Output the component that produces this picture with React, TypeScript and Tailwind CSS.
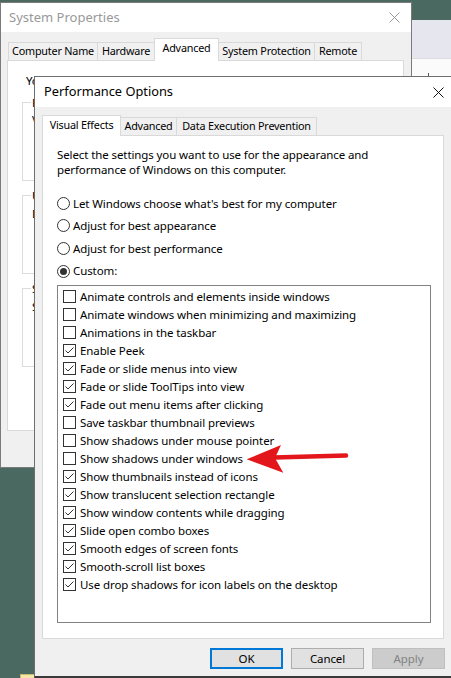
import React from "react";

const CheckBox = ({ checked }: { checked: boolean }) => (
  <span className="w-[13px] h-[13px] border border-[#333333] bg-white flex items-center justify-center shrink-0">
    {checked && (
      <svg width="11" height="11" viewBox="0 0 11 11">
        <path d="M1.5 5.5 L4 8 L9.5 2.5" stroke="#333333" strokeWidth="1" fill="none" />
      </svg>
    )}
  </span>
);

const Radio = ({ checked }: { checked: boolean }) => (
  <span className="w-[13px] h-[13px] rounded-full border border-[#333333] bg-white flex items-center justify-center shrink-0">
    {checked && <span className="w-[7px] h-[7px] rounded-full bg-[#333333]" />}
  </span>
);

const CloseX = ({ color }: { color: string }) => (
  <svg width="11" height="11" viewBox="0 0 11 11">
    <path d="M0.5 0.5 L10.5 10.5 M10.5 0.5 L0.5 10.5" stroke={color} strokeWidth="1" fill="none" />
  </svg>
);

const items: [string, boolean][] = [
  ["Animate controls and elements inside windows", false],
  ["Animate windows when minimizing and maximizing", false],
  ["Animations in the taskbar", false],
  ["Enable Peek", true],
  ["Fade or slide menus into view", true],
  ["Fade or slide ToolTips into view", true],
  ["Fade out menu items after clicking", true],
  ["Save taskbar thumbnail previews", false],
  ["Show shadows under mouse pointer", false],
  ["Show shadows under windows", false],
  ["Show thumbnails instead of icons", true],
  ["Show translucent selection rectangle", true],
  ["Show window contents while dragging", true],
  ["Slide open combo boxes", true],
  ["Smooth edges of screen fonts", true],
  ["Smooth-scroll list boxes", true],
  ["Use drop shadows for icon labels on the desktop", true],
];

const radios: [string, boolean][] = [
  ["Let Windows choose what's best for my computer", false],
  ["Adjust for best appearance", false],
  ["Adjust for best performance", false],
  ["Custom:", true],
];

export default function App() {
  return (
    <div className="relative w-[451px] h-[678px] overflow-hidden bg-[#4a6a61] font-['Noto_Sans',sans-serif] text-[11.5px] tracking-[-0.1px] text-black whitespace-nowrap">
      {/* window behind on the right */}
      <div className="absolute left-[412px] top-[20px] w-[39px] h-[56px] bg-[#e6e6ee] flex flex-col justify-end">
        <div className="h-[18px] bg-[#fbfbfb] border-t border-[#dddddd] relative">
          <div className="absolute left-[16px] bottom-0 w-[1px] h-[3px] bg-[#555555]" />
        </div>
      </div>

      {/* System Properties window */}
      <div className="absolute left-0 top-[2px] w-[412px] h-[466px] bg-[#f0f0f0] border border-[#7a7a7a] flex flex-col">
        <div className="h-[29px] bg-white flex items-center justify-between pl-[8px] pr-[11px] shrink-0">
          <span className="text-[13px] tracking-normal text-[#999999]">System Properties</span>
          <CloseX color="#9a9a9a" />
        </div>
        <div className="pl-[6px] pt-[5px]">
          <div className="flex items-end h-[23px] text-[10.8px] tracking-[-0.2px]">
            <div className="w-[89px] h-[18px] ml-[1px] border-t border-l border-[#d9d9d9] flex items-center justify-center">Computer Name</div>
            <div className="w-[57px] h-[18px] border-t border-l border-[#d9d9d9] flex items-center justify-center">Hardware</div>
            <div className="w-[65px] h-[23px] mb-[-1px] relative z-10 bg-white border-t border-l border-r border-[#d9d9d9] flex items-start justify-center pt-[1px]">Advanced</div>
            <div className="w-[95px] h-[18px] border-t border-[#d9d9d9] flex items-center justify-center">System Protection</div>
            <div className="w-[48px] h-[18px] border-t border-l border-r border-[#d9d9d9] flex items-center justify-center">Remote</div>
          </div>
          <div className="w-[397px] h-[371px] bg-white border border-[#d9d9d9] pl-[14px] pt-[12px] flex flex-col overflow-hidden">
            <div className="pl-[4px] leading-[15px]">You must be logged on as an Administrator to make most of these changes.</div>
            <div className="mt-[14px] mr-[12px] h-[79px] border border-[#dcdcdc] relative pl-[9px] pt-[9px] leading-[15px]">
              <span className="absolute left-[8px] top-[-8px] bg-white px-[1px] leading-[15px]">Performance</span>
              Visual effects, processor scheduling, memory usage and virtual memory
            </div>
            <div className="mt-[14px] mr-[12px] h-[79px] border border-[#dcdcdc] relative pl-[9px] pt-[10px] leading-[15px]">
              <span className="absolute left-[8px] top-[-8px] bg-white px-[1px] leading-[15px]">User Profiles</span>
              Desktop settings related to your sign-in
            </div>
            <div className="mt-[14px] mr-[12px] h-[79px] border border-[#dcdcdc] relative pl-[9px] pt-[10px] leading-[15px]">
              <span className="absolute left-[8px] top-[-8px] bg-white px-[1px] leading-[15px]">Startup and Recovery</span>
              System startup, system failure, and debugging information
            </div>
          </div>
        </div>
      </div>

      {/* Performance Options window */}
      <div className="absolute left-[34px] top-[76px] w-[440px] h-[602px] bg-[#f0f0f0] border-l border-t border-[#6e6e6e] border-b-2 border-b-[#3a3a3a] flex flex-col">
        <div className="h-[30px] bg-white flex items-center pl-[9px] shrink-0 relative">
          <span className="text-[12.8px] tracking-normal">Performance Options</span>
          <div className="absolute left-[398px] top-[10px]">
            <CloseX color="#111111" />
          </div>
        </div>
        <div className="pl-[7px] pt-[8px] flex flex-col">
          <div className="flex items-end h-[20px] text-[10.8px] tracking-[-0.2px]">
            <div className="w-[79px] h-[21px] mb-[-1px] relative z-10 bg-white border-t border-l border-r border-[#d9d9d9] flex items-start justify-center pt-[1px]">Visual Effects</div>
            <div className="w-[55px] h-[18px] border-t border-[#d9d9d9] flex items-center justify-center">Advanced</div>
            <div className="w-[141px] h-[18px] border-t border-l border-r border-[#d9d9d9] flex items-center justify-center">Data Execution Prevention</div>
          </div>
          <div className="w-[402px] h-[504px] bg-white border border-[#d9d9d9] pl-[14px] pt-[11px] flex flex-col">
            <div className="leading-[15px]">
              Select the settings you want to use for the appearance and
              <br />
              performance of Windows on this computer.
            </div>
            <div className="mt-[15px] flex flex-col">
              {radios.map(([label, on]) => (
                <div key={label} className="h-[22.6px] flex items-center gap-[3px]">
                  <Radio checked={on} />
                  <span>{label}</span>
                </div>
              ))}
            </div>
            <div className="mt-[3px] w-[374px] h-[338px] border border-[#828282] pl-[5px] pt-[1px] flex flex-col">
              {items.map(([label, on]) => (
                <div key={label} className="h-[18px] flex items-center gap-[4px]">
                  <CheckBox checked={on} />
                  <span>{label}</span>
                </div>
              ))}
            </div>
          </div>
          <div className="mt-[9px] ml-[168px] flex gap-[8px]">
            <div className="w-[73px] h-[21px] bg-[#e1e1e1] border-2 border-[#0078d7] flex items-center justify-center">OK</div>
            <div className="w-[73px] h-[21px] bg-[#e1e1e1] border border-[#adadad] flex items-center justify-center">Cancel</div>
            <div className="w-[73px] h-[21px] bg-[#cccccc] border border-[#bfbfbf] text-[#838383] flex items-center justify-center">Apply</div>
          </div>
        </div>
      </div>

      {/* yellow icon fragment */}
      <div className="absolute left-[20px] top-[674px] w-[14px] h-[4px] bg-[#f3e8a8] border-t border-l border-[#c9b96e]" />

      {/* red arrow annotation */}
      <svg className="absolute left-[240px] top-[440px]" width="112" height="40" viewBox="0 0 112 40">
        <path d="M34 17.6 L106 15.6" stroke="#e3161c" strokeWidth="4.5" strokeLinecap="round" fill="none" />
        <polygon points="6.7,19.3 41,5 35,18 43.3,32.7" fill="#e3161c" />
      </svg>
    </div>
  );
}
